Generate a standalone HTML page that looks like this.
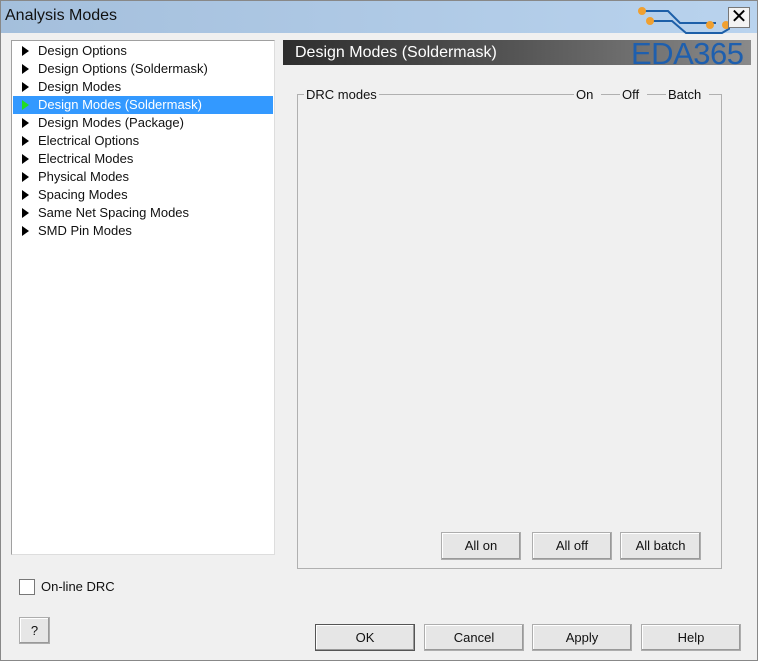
<!DOCTYPE html>
<html><head><style>
*{box-sizing:border-box;margin:0;padding:0}
body{width:758px;height:661px;background:#f0f0f0;font-family:"Liberation Sans",sans-serif;position:relative;overflow:hidden}
.a{position:absolute}
.frame{left:0;top:0;width:758px;height:661px;border:1px solid #888;pointer-events:none}
.title{left:0;top:0;width:758px;height:33px;background:linear-gradient(90deg,#a4bfdc,#b9d3ee);}
.title span{position:absolute;left:5px;top:7px;font-size:16px;color:#111}
.tree{left:11px;top:40px;width:264px;height:515px;background:#fff;border:1px solid #a0a0a0;border-right-color:#ddd;border-bottom-color:#ddd}
.row{position:absolute;left:1px;width:260px;height:18px;font-size:13px;color:#111;line-height:18px;padding-left:25px}
.row i{position:absolute;left:9px;top:4px;width:0;height:0;border-left:7px solid #000;border-top:5px solid transparent;border-bottom:5px solid transparent}
.sel{background:#3399ff;color:#fff}
.sel i{border-left-color:#22dd22}
.hdr{left:283px;top:40px;width:468px;height:25px;background:linear-gradient(90deg,#2e2e2e,#555 50%,#8a8a8a);color:#fff;font-size:16px;line-height:25px;padding-left:12px}
.btn{position:absolute;background:#e6e6e6;border:1px solid #adadad;box-shadow:inset -1px -1px 0 #999,inset 1px 1px 0 #fff;font-size:13px;text-align:center;color:#111}
.grp{left:297px;top:94px;width:425px;height:475px;border:1px solid #b0b0b0}
.lbl{position:absolute;background:#f0f0f0;font-size:13px;color:#111;padding:0 2px}
</style></head><body>
<div class="a title"><span>Analysis Modes</span></div>
<svg class="a" style="left:630px;top:5px" width="100" height="30"><g fill="none" stroke="#1d5fa8" stroke-width="2"><path d="M12 6 H38 L50 18 H86"/><path d="M20 16 H42 L56 28 H92 L102 22"/></g><g fill="#f0a030"><circle cx="12" cy="6" r="4"/><circle cx="20" cy="16" r="4"/><circle cx="80" cy="20" r="4"/><circle cx="96" cy="20" r="4"/></g></svg>
<div class="a" style="left:728px;top:7px;width:22px;height:21px;background:#f3f3f3;border:1px solid #777;font-size:20px;line-height:19px;text-align:center">✕</div>
<div class="a tree">
<div class="row" style="top:1px"><i></i>Design Options</div>
<div class="row" style="top:19px"><i></i>Design Options (Soldermask)</div>
<div class="row" style="top:37px"><i></i>Design Modes</div>
<div class="row sel" style="top:55px"><i></i>Design Modes (Soldermask)</div>
<div class="row" style="top:73px"><i></i>Design Modes (Package)</div>
<div class="row" style="top:91px"><i></i>Electrical Options</div>
<div class="row" style="top:109px"><i></i>Electrical Modes</div>
<div class="row" style="top:127px"><i></i>Physical Modes</div>
<div class="row" style="top:145px"><i></i>Spacing Modes</div>
<div class="row" style="top:163px"><i></i>Same Net Spacing Modes</div>
<div class="row" style="top:181px"><i></i>SMD Pin Modes</div>
</div>
<div class="a hdr">Design Modes (Soldermask)</div>
<div class="a" style="left:631px;top:36px;font-size:31px;color:#1e5fae;letter-spacing:-0.5px">EDA365</div>
<div class="a grp"></div>
<div class="lbl" style="left:304px;top:87px">DRC modes</div>
<div class="lbl" style="left:574px;top:87px;padding-right:8px">On</div>
<div class="lbl" style="left:620px;top:87px;padding-right:8px">Off</div>
<div class="lbl" style="left:666px;top:87px;padding-right:8px">Batch</div>
<div class="btn" style="left:441px;top:532px;width:80px;height:28px;line-height:26px">All on</div>
<div class="btn" style="left:532px;top:532px;width:80px;height:28px;line-height:26px">All off</div>
<div class="btn" style="left:620px;top:532px;width:81px;height:28px;line-height:26px">All batch</div>
<div class="a" style="left:19px;top:579px;width:16px;height:16px;background:#fff;border:1px solid #777"></div>
<div class="a" style="left:41px;top:579px;font-size:13px;color:#111">On-line DRC</div>
<div class="btn" style="left:19px;top:617px;width:31px;height:27px;line-height:25px">?</div>
<div class="btn" style="left:315px;top:624px;width:100px;height:27px;line-height:25px;border-color:#555">OK</div>
<div class="btn" style="left:424px;top:624px;width:100px;height:27px;line-height:25px">Cancel</div>
<div class="btn" style="left:532px;top:624px;width:100px;height:27px;line-height:25px">Apply</div>
<div class="btn" style="left:641px;top:624px;width:100px;height:27px;line-height:25px">Help</div>
<div class="a frame"></div>
</body></html>
